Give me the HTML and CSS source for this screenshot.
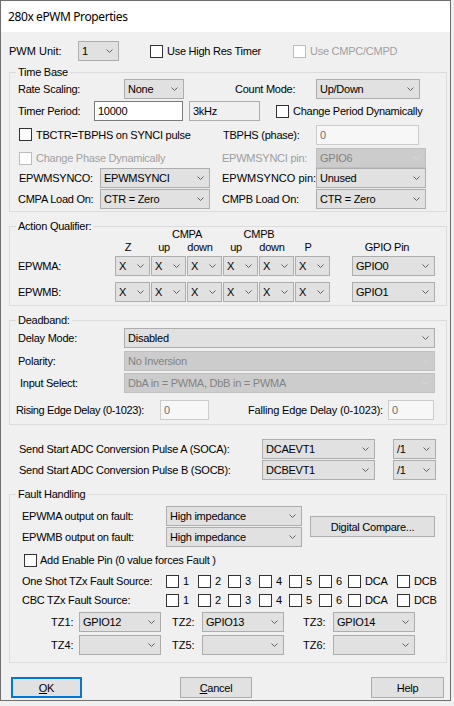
FILE: index.html
```html
<!DOCTYPE html>
<html>
<head>
<meta charset="utf-8">
<link rel="stylesheet" href="styles.css">
</head>
<body>
<div class="win">
  <div class="title">280x ePWM Properties</div>
  <div class="content">
    <div class="row">
      <span class="lab ml8 w69 wide">PWM Unit:</span>
      <div class="cb w41"><span>1</span><svg class="chev" viewBox="0 0 7 4"><polyline points="0.5,0.5 3.5,3.5 6.5,0.5"/></svg></div>
      <div class="chk ml31 w143"><i class="box"></i>Use High Res Timer</div>
      <div class="chk dis"><i class="box"></i>Use CMPC/CMPD</div>
    </div>

    <div class="grp g-tb">
      <span class="legend">Time Base</span>
      <div class="row">
        <span class="lab ml8 w106">Rate Scaling:</span>
        <div class="cb w60"><span>None</span><svg class="chev" viewBox="0 0 7 4"><polyline points="0.5,0.5 3.5,3.5 6.5,0.5"/></svg></div>
        <span class="lab ml51 w81">Count Mode:</span>
        <div class="cb w104"><span>Up/Down</span><svg class="chev" viewBox="0 0 7 4"><polyline points="0.5,0.5 3.5,3.5 6.5,0.5"/></svg></div>
      </div>
      <div class="row mt2">
        <span class="lab ml8 w76">Timer Period:</span>
        <div class="tb w89">10000</div>
        <div class="tb ro ml6 w71">3kHz</div>
        <div class="chk ml16"><i class="box"></i>Change Period Dynamically</div>
      </div>
      <div class="row h21 mt3">
        <div class="chk ml9 w204"><i class="box"></i>TBCTR=TBPHS on SYNCI pulse</div>
        <span class="lab w93">TBPHS (phase):</span>
        <div class="tb dis w103 h21">0</div>
      </div>
      <div class="row mt3">
        <div class="chk dis ml9 w203"><i class="box"></i>Change Phase Dynamically</div>
        <span class="lab gray w94">EPWMSYNCI pin:</span>
        <div class="cb dis w110"><span>GPIO6</span><svg class="chev" viewBox="0 0 7 4"><polyline points="0.5,0.5 3.5,3.5 6.5,0.5"/></svg></div>
      </div>
      <div class="row">
        <span class="lab ml9 w81">EPWMSYNCO:</span>
        <div class="cb w110"><span>EPWMSYNCI</span><svg class="chev" viewBox="0 0 7 4"><polyline points="0.5,0.5 3.5,3.5 6.5,0.5"/></svg></div>
        <span class="lab ml12 w94 wide">EPWMSYNCO pin:</span>
        <div class="cb w110"><span>Unused</span><svg class="chev" viewBox="0 0 7 4"><polyline points="0.5,0.5 3.5,3.5 6.5,0.5"/></svg></div>
      </div>
      <div class="row mt1">
        <span class="lab ml8 w82">CMPA Load On:</span>
        <div class="cb w110"><span>CTR = Zero</span><svg class="chev" viewBox="0 0 7 4"><polyline points="0.5,0.5 3.5,3.5 6.5,0.5"/></svg></div>
        <span class="lab ml12 w94">CMPB Load On:</span>
        <div class="cb w110"><span>CTR = Zero</span><svg class="chev" viewBox="0 0 7 4"><polyline points="0.5,0.5 3.5,3.5 6.5,0.5"/></svg></div>
      </div>
    </div>

    <div class="grp g-aq">
      <span class="legend">Action Qualifier:</span>
      <div class="row h13">
        <span class="hd ml141 w72">CMPA</span>
        <span class="hd w72">CMPB</span>
      </div>
      <div class="row h13">
        <span class="hd ml100 w36">Z</span>
        <span class="hd w36">up</span>
        <span class="hd w36">down</span>
        <span class="hd w36">up</span>
        <span class="hd w36">down</span>
        <span class="hd w36">P</span>
        <span class="hd ml20 w82">GPIO Pin</span>
      </div>
      <div class="row mt2 aqrow">
        <span class="lab ml8 w97">EPWMA:</span>
        <div class="cb w35"><span>X</span><svg class="chev" viewBox="0 0 7 4"><polyline points="0.5,0.5 3.5,3.5 6.5,0.5"/></svg></div>
        <div class="cb w35"><span>X</span><svg class="chev" viewBox="0 0 7 4"><polyline points="0.5,0.5 3.5,3.5 6.5,0.5"/></svg></div>
        <div class="cb w35"><span>X</span><svg class="chev" viewBox="0 0 7 4"><polyline points="0.5,0.5 3.5,3.5 6.5,0.5"/></svg></div>
        <div class="cb w35"><span>X</span><svg class="chev" viewBox="0 0 7 4"><polyline points="0.5,0.5 3.5,3.5 6.5,0.5"/></svg></div>
        <div class="cb w35"><span>X</span><svg class="chev" viewBox="0 0 7 4"><polyline points="0.5,0.5 3.5,3.5 6.5,0.5"/></svg></div>
        <div class="cb w35"><span>X</span><svg class="chev" viewBox="0 0 7 4"><polyline points="0.5,0.5 3.5,3.5 6.5,0.5"/></svg></div>
        <div class="cb gpio w83"><span>GPIO0</span><svg class="chev" viewBox="0 0 7 4"><polyline points="0.5,0.5 3.5,3.5 6.5,0.5"/></svg></div>
      </div>
      <div class="row mt6 aqrow">
        <span class="lab ml8 w97">EPWMB:</span>
        <div class="cb w35"><span>X</span><svg class="chev" viewBox="0 0 7 4"><polyline points="0.5,0.5 3.5,3.5 6.5,0.5"/></svg></div>
        <div class="cb w35"><span>X</span><svg class="chev" viewBox="0 0 7 4"><polyline points="0.5,0.5 3.5,3.5 6.5,0.5"/></svg></div>
        <div class="cb w35"><span>X</span><svg class="chev" viewBox="0 0 7 4"><polyline points="0.5,0.5 3.5,3.5 6.5,0.5"/></svg></div>
        <div class="cb w35"><span>X</span><svg class="chev" viewBox="0 0 7 4"><polyline points="0.5,0.5 3.5,3.5 6.5,0.5"/></svg></div>
        <div class="cb w35"><span>X</span><svg class="chev" viewBox="0 0 7 4"><polyline points="0.5,0.5 3.5,3.5 6.5,0.5"/></svg></div>
        <div class="cb w35"><span>X</span><svg class="chev" viewBox="0 0 7 4"><polyline points="0.5,0.5 3.5,3.5 6.5,0.5"/></svg></div>
        <div class="cb gpio w83"><span>GPIO1</span><svg class="chev" viewBox="0 0 7 4"><polyline points="0.5,0.5 3.5,3.5 6.5,0.5"/></svg></div>
      </div>
    </div>

    <div class="grp g-db">
      <span class="legend">Deadband:</span>
      <div class="row">
        <span class="lab ml8 w106">Delay Mode:</span>
        <div class="cb w311"><span>Disabled</span><svg class="chev" viewBox="0 0 7 4"><polyline points="0.5,0.5 3.5,3.5 6.5,0.5"/></svg></div>
      </div>
      <div class="row mt3">
        <span class="lab ml8 w106">Polarity:</span>
        <div class="cb dis w311"><span>No Inversion</span><svg class="chev" viewBox="0 0 7 4"><polyline points="0.5,0.5 3.5,3.5 6.5,0.5"/></svg></div>
      </div>
      <div class="row mt2">
        <span class="lab ml10 w104">Input Select:</span>
        <div class="cb dis w311"><span>DbA in = PWMA, DbB in = PWMA</span><svg class="chev" viewBox="0 0 7 4"><polyline points="0.5,0.5 3.5,3.5 6.5,0.5"/></svg></div>
      </div>
      <div class="row h21 mt6">
        <span class="lab ml6 w144 narrow">Rising Edge Delay (0-1023):</span>
        <div class="tb dis w49 h21">0</div>
        <span class="lab right w179 semi">Falling Edge Delay (0-1023):</span>
        <div class="tb dis w46 h21">0</div>
      </div>
    </div>

    <div class="row mt14">
      <span class="lab ml18 w243">Send Start ADC Conversion Pulse A (SOCA):</span>
      <div class="cb w113"><span>DCAEVT1</span><svg class="chev" viewBox="0 0 7 4"><polyline points="0.5,0.5 3.5,3.5 6.5,0.5"/></svg></div>
      <div class="cb ml18 w43"><span>/1</span><svg class="chev" viewBox="0 0 7 4"><polyline points="0.5,0.5 3.5,3.5 6.5,0.5"/></svg></div>
    </div>
    <div class="row mt1">
      <span class="lab ml18 w243">Send Start ADC Conversion Pulse B (SOCB):</span>
      <div class="cb w113"><span>DCBEVT1</span><svg class="chev" viewBox="0 0 7 4"><polyline points="0.5,0.5 3.5,3.5 6.5,0.5"/></svg></div>
      <div class="cb ml18 w43"><span>/1</span><svg class="chev" viewBox="0 0 7 4"><polyline points="0.5,0.5 3.5,3.5 6.5,0.5"/></svg></div>
    </div>

    <div class="grp g-fh">
      <span class="legend">Fault Handling</span>
      <div class="fault-top">
        <div class="fault-col">
          <div class="row">
            <span class="lab ml12 w144">EPWMA output on fault:</span>
            <div class="cb w136"><span>High impedance</span><svg class="chev" viewBox="0 0 7 4"><polyline points="0.5,0.5 3.5,3.5 6.5,0.5"/></svg></div>
          </div>
          <div class="row mt1">
            <span class="lab ml12 w144">EPWMB output on fault:</span>
            <div class="cb w136"><span>High impedance</span><svg class="chev" viewBox="0 0 7 4"><polyline points="0.5,0.5 3.5,3.5 6.5,0.5"/></svg></div>
          </div>
        </div>
        <div class="btn dc">Digital Compare...</div>
      </div>
      <div class="row h14 mt6">
        <div class="chk ml14 tight"><i class="box"></i>Add Enable Pin (0 value forces Fault )</div>
      </div>
      <div class="row h14 mt7">
        <span class="lab ml12 w144">One Shot TZx Fault Source:</span>
        <div class="chk w32"><i class="box"></i>1</div>
        <div class="chk w30"><i class="box"></i>2</div>
        <div class="chk w31"><i class="box"></i>3</div>
        <div class="chk w30"><i class="box"></i>4</div>
        <div class="chk w30"><i class="box"></i>5</div>
        <div class="chk w29"><i class="box"></i>6</div>
        <div class="chk w49"><i class="box"></i>DCA</div>
        <div class="chk"><i class="box"></i>DCB</div>
      </div>
      <div class="row h14 mt5">
        <span class="lab ml12 w144">CBC TZx Fault Source:</span>
        <div class="chk w32"><i class="box"></i>1</div>
        <div class="chk w30"><i class="box"></i>2</div>
        <div class="chk w31"><i class="box"></i>3</div>
        <div class="chk w30"><i class="box"></i>4</div>
        <div class="chk w30"><i class="box"></i>5</div>
        <div class="chk w29"><i class="box"></i>6</div>
        <div class="chk w49"><i class="box"></i>DCA</div>
        <div class="chk"><i class="box"></i>DCB</div>
      </div>
      <div class="row mt5">
        <span class="lab ml41 w28 wide">TZ1:</span>
        <div class="cb w82"><span>GPIO12</span><svg class="chev" viewBox="0 0 7 4"><polyline points="0.5,0.5 3.5,3.5 6.5,0.5"/></svg></div>
        <span class="lab ml11 w30 wide">TZ2:</span>
        <div class="cb w82"><span>GPIO13</span><svg class="chev" viewBox="0 0 7 4"><polyline points="0.5,0.5 3.5,3.5 6.5,0.5"/></svg></div>
        <span class="lab ml19 w30 wide">TZ3:</span>
        <div class="cb w82"><span>GPIO14</span><svg class="chev" viewBox="0 0 7 4"><polyline points="0.5,0.5 3.5,3.5 6.5,0.5"/></svg></div>
      </div>
      <div class="row mt3">
        <span class="lab ml41 w28 wide">TZ4:</span>
        <div class="cb w82"><span></span><svg class="chev" viewBox="0 0 7 4"><polyline points="0.5,0.5 3.5,3.5 6.5,0.5"/></svg></div>
        <span class="lab ml11 w30 wide">TZ5:</span>
        <div class="cb w82"><span></span><svg class="chev" viewBox="0 0 7 4"><polyline points="0.5,0.5 3.5,3.5 6.5,0.5"/></svg></div>
        <span class="lab ml19 w30 wide">TZ6:</span>
        <div class="cb w82"><span></span><svg class="chev" viewBox="0 0 7 4"><polyline points="0.5,0.5 3.5,3.5 6.5,0.5"/></svg></div>
      </div>
    </div>

    <div class="row h21 btnrow">
      <div class="btn ok ml10 w71"><span><u>O</u>K</span></div>
      <div class="btn ml98 w72"><span><u>C</u>ancel</span></div>
      <div class="btn ml119 w73"><span>Help</span></div>
    </div>
  </div>
</div>
</body>
</html>
```
FILE: styles.css
```css
* { box-sizing: border-box; }
html, body { margin: 0; padding: 0; background: #f0f0f0; }
body {
  width: 454px; height: 706px; overflow: hidden;
  font-family: "Liberation Sans", Arial, sans-serif;
  font-size: 11px; color: #000; letter-spacing: -0.25px;
}
.win { width: 451px; height: 701px; border: 1px solid #6f6f6f; background: #f0f0f0; }
.title {
  height: 31px; background: #fff; padding-left: 7px;
  display: flex; align-items: center;
  font-family: "Noto Sans", sans-serif; font-size: 12px; letter-spacing: -0.4px;
}
.content { padding-top: 9px; }
.row { display: flex; align-items: center; height: 20px; }
.h21 { height: 21px; }
.h14 { height: 14px; }
.h13 { height: 13px; }
.lab { flex: none; white-space: nowrap; }
.lab.right { text-align: right; padding-right: 5px; }
.wide { letter-spacing: 0; }
.narrow { letter-spacing: -0.38px; }
.semi { letter-spacing: -0.18px; }
.gray { color: #9d9d9d; }
.hd { flex: none; text-align: center; white-space: nowrap; line-height: 13px; }

.cb {
  flex: none; height: 20px; display: flex; align-items: center; justify-content: space-between;
  border: 1px solid #adadad; background: #e1e1e1;
  padding: 0 5px 0 3px; white-space: nowrap; overflow: hidden;
}
.cb.dis { background: #cccccc; border-color: #bfbfbf; color: #838383; }
.chev { width: 7px; height: 4px; flex: none; }
.chev polyline { fill: none; stroke: #606060; stroke-width: 1; }
.cb.dis .chev polyline { stroke: #dadada; }
.aqrow .cb + .cb { margin-left: 1px; }
.aqrow .cb.gpio { margin-left: 22px; }

.tb {
  flex: none; height: 20px; display: flex; align-items: center;
  border: 1px solid #7a7a7a; background: #fff; padding-left: 3px;
}
.tb.ro { background: #f0f0f0; border-color: #adadad; }
.tb.dis { background: #f7f7f7; border-color: #cccccc; color: #6d6d6d; }

.chk { flex: none; display: flex; align-items: center; white-space: nowrap; }
.box { width: 13px; height: 13px; border: 1px solid #333; background: #fff; margin-right: 4px; flex: none; }
.chk.tight .box { margin-right: 3px; }
.chk.dis { color: #a0a0a0; }
.chk.dis .box { border-color: #bcbcbc; background: #fff; }

.grp { position: relative; margin-left: 8px; width: 438px; border: 1px solid #dcdcdc; }
.legend {
  position: absolute; top: -7px; left: 6px; padding: 0 2px;
  background: #f0f0f0; line-height: 13px; white-space: nowrap;
}
.g-tb { margin-top: 11px; padding: 6px 0 2px; }
.g-aq { margin-top: 14px; padding: 1px 0 3px; }
.g-db { margin-top: 14px; padding: 7px 0 4px; }
.g-fh { margin-top: 14px; padding: 11px 0 7px; }

.fault-top { display: flex; align-items: center; }
.btn {
  flex: none; height: 21px; display: flex; align-items: center; justify-content: center;
  border: 1px solid #adadad; background: #e1e1e1;
}
.btn.dc { margin-left: 8px; width: 125px; }
.btn.ok { border: 2px solid #0078d7; }
.btnrow { margin-top: 14px; }

.mt1 { margin-top: 1px; } .mt2 { margin-top: 2px; } .mt3 { margin-top: 3px; }
.mt5 { margin-top: 5px; } .mt6 { margin-top: 6px; } .mt7 { margin-top: 7px; }
.mt14 { margin-top: 14px; }
.ml6 { margin-left: 6px; } .ml8 { margin-left: 8px; } .ml9 { margin-left: 9px; }
.ml10 { margin-left: 10px; } .ml11 { margin-left: 11px; } .ml12 { margin-left: 12px; }
.ml14 { margin-left: 14px; } .ml16 { margin-left: 16px; } .ml18 { margin-left: 18px; }
.ml19 { margin-left: 19px; } .ml20 { margin-left: 20px; } .ml31 { margin-left: 31px; }
.ml41 { margin-left: 41px; } .ml51 { margin-left: 51px; } .ml98 { margin-left: 98px; }
.ml100 { margin-left: 100px; } .ml119 { margin-left: 119px; } .ml141 { margin-left: 141px; }

.w28 { width: 28px; } .w29 { width: 29px; } .w30 { width: 30px; } .w31 { width: 31px; }
.w32 { width: 32px; } .w35 { width: 35px; } .w36 { width: 36px; } .w41 { width: 41px; }
.w43 { width: 43px; } .w46 { width: 46px; } .w49 { width: 49px; } .w60 { width: 60px; }
.w69 { width: 69px; } .w71 { width: 71px; } .w72 { width: 72px; } .w73 { width: 73px; }
.w76 { width: 76px; } .w81 { width: 81px; } .w82 { width: 82px; } .w83 { width: 83px; }
.w89 { width: 89px; } .w93 { width: 93px; } .w94 { width: 94px; } .w97 { width: 97px; }
.w103 { width: 103px; } .w104 { width: 104px; } .w106 { width: 106px; } .w110 { width: 110px; }
.w113 { width: 113px; } .w136 { width: 136px; } .w143 { width: 143px; } .w144 { width: 144px; }
.w179 { width: 179px; } .w203 { width: 203px; } .w204 { width: 204px; } .w243 { width: 243px; }
.w311 { width: 311px; }
```
